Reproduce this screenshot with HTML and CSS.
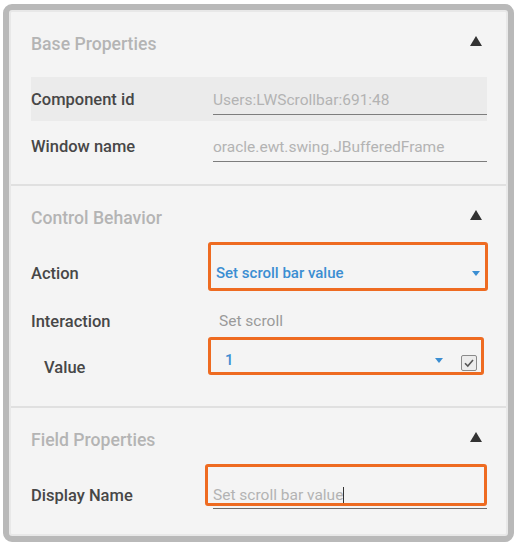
FILE: index.html
```html
<!DOCTYPE html>
<html>
<head>
    <meta charset="UTF-8">
    <title>Properties</title>
    <link rel="stylesheet" href="styles.css">
</head>
<body>
    <div class="panel">
        <div class="panel-inner">

            <!-- Base Properties -->
            <section class="group">
                <div class="group-head">
                    <span class="group-title">Base Properties</span>
                    <span class="collapse"></span>
                </div>
                <div class="row row-shaded">
                    <span class="label">Component id</span>
                    <span class="field readonly">Users:LWScrollbar:691:48</span>
                </div>
                <div class="row row-second">
                    <span class="label">Window name</span>
                    <span class="field readonly">oracle.ewt.swing.JBufferedFrame</span>
                </div>
            </section>

            <!-- Control Behavior -->
            <section class="group group-mid">
                <div class="group-head">
                    <span class="group-title">Control Behavior</span>
                    <span class="collapse"></span>
                </div>
                <div class="row">
                    <span class="label">Action</span>
                    <span class="field select marked mark-action">
                        <span class="select-text">Set scroll bar value</span>
                        <span class="chevron"></span>
                    </span>
                </div>
                <div class="row">
                    <span class="label">Interaction</span>
                    <span class="plain-value">Set scroll</span>
                </div>
                <div class="row row-value">
                    <span class="label label-indent">Value</span>
                    <span class="value-wrap marked mark-value">
                        <span class="select-text num">1</span>
                        <span class="chevron"></span>
                        <span class="checkbox">
                            <svg width="12" height="12" viewBox="0 0 12 12"><path d="M2 6.2 L4.8 9 L10 3" fill="none" stroke="#555" stroke-width="1.6"/></svg>
                        </span>
                    </span>
                </div>
            </section>

            <!-- Field Properties -->
            <section class="group">
                <div class="group-head">
                    <span class="group-title">Field Properties</span>
                    <span class="collapse"></span>
                </div>
                <div class="row">
                    <span class="label">Display Name</span>
                    <span class="field input marked mark-name">Set scroll bar value<span class="caret"></span></span>
                </div>
            </section>

        </div>
    </div>
</body>
</html>
```

FILE: styles.css
```css
body {
    margin: 0;
    background-color: #fff;
    font-family: Roboto, "Noto Sans", Arial, sans-serif;
}

.panel {
    margin: 4px 0 0 3px;
    width: 511px;
    height: 538px;
    box-sizing: border-box;
    border: 6px solid #b9b9b9;
    border-radius: 9px;
    background-color: #b9b9b9;
}

.panel-inner {
    height: 100%;
    box-sizing: border-box;
    border: 2px solid #e8e8e8;
    border-radius: 3px;
    background-color: #f4f4f4;
}

.group {
    padding: 16px 19px 16px 20px;
    border-bottom: 2px solid #e0e0e0;
}

.group:last-child {
    border-bottom: none;
}

.group-mid {
    padding-bottom: 19px;
}

.group-head {
    display: flex;
    align-items: center;
    justify-content: space-between;
    height: 32px;
    margin-bottom: 17px;
}

.group-mid .group-head {
    margin-bottom: 15px;
}

.group-title {
    font-size: 17.6px;
    font-weight: 500;
    color: #b4b4b4;
}

.collapse {
    width: 0;
    height: 0;
    margin-right: 5px;
    margin-top: -6px;
    border-left: 6px solid transparent;
    border-right: 6px solid transparent;
    border-bottom: 10px solid #333;
}

.row {
    display: flex;
    align-items: center;
    height: 44px;
    position: relative;
}

.row-second {
    margin-top: 3px;
}

.group-mid .row {
    height: 48px;
}

.group-mid .row-value {
    height: 42px;
}

.row-shaded {
    background-color: #ebebeb;
}

.label {
    width: 182px;
    flex-shrink: 0;
    font-size: 16.5px;
    font-weight: 500;
    color: #474747;
}

.label-indent {
    padding-left: 13px;
    box-sizing: border-box;
    align-self: flex-end;
    margin-bottom: 10px;
}

.field {
    flex: 1;
    font-size: 15.5px;
    position: relative;
}

.readonly {
    color: #b3b3b3;
    padding: 5px 0 5px;
    border-bottom: 1.5px solid #7d7d7d;
    margin-top: 3px;
}

.select {
    display: flex;
    align-items: center;
    justify-content: space-between;
    padding-left: 3px;
}

.select-text {
    font-size: 15px;
    font-weight: 500;
    color: #3b8ed2;
}

.num {
    padding-left: 12px;
}

.chevron {
    width: 0;
    height: 0;
    margin-right: 7px;
    border-left: 4px solid transparent;
    border-right: 4px solid transparent;
    border-top: 5px solid #3b8ed2;
}

.plain-value {
    padding-left: 6px;
    font-size: 15.5px;
    color: #9a9a9a;
}

.value-wrap {
    flex: 1;
    display: flex;
    align-items: center;
    position: relative;
    margin-right: 3px;
    margin-top: -12px;
}

.value-wrap .select-text {
    flex: 1;
}

.value-wrap .chevron {
    margin-right: 18px;
}

.checkbox {
    display: flex;
    align-items: center;
    justify-content: center;
    width: 14px;
    height: 14px;
    border: 1.5px solid #8a8a8a;
    border-radius: 2px;
    background-color: #ececec;
    margin-right: 7px;
    margin-top: 6px;
}

.input {
    color: #b3b3b3;
    padding: 5px 0 4px;
    border-bottom: 1.5px solid #6d6d6d;
    margin-top: -1px;
}

.caret {
    display: inline-block;
    width: 1px;
    height: 17px;
    background-color: #333;
    vertical-align: -4px;
}

/* orange annotation boxes drawn over the fields */
.marked::after {
    content: "";
    position: absolute;
    border: 3px solid #ee6b21;
    border-radius: 3px;
}

.mark-action::after {
    left: -5px;
    right: -1px;
    top: -22px;
    bottom: -9px;
}

.mark-value::after {
    left: -5px;
    right: 0;
    top: -12px;
    bottom: -4px;
}

.mark-name::after {
    left: -8px;
    right: 0;
    top: -17px;
    bottom: 2px;
}
```
